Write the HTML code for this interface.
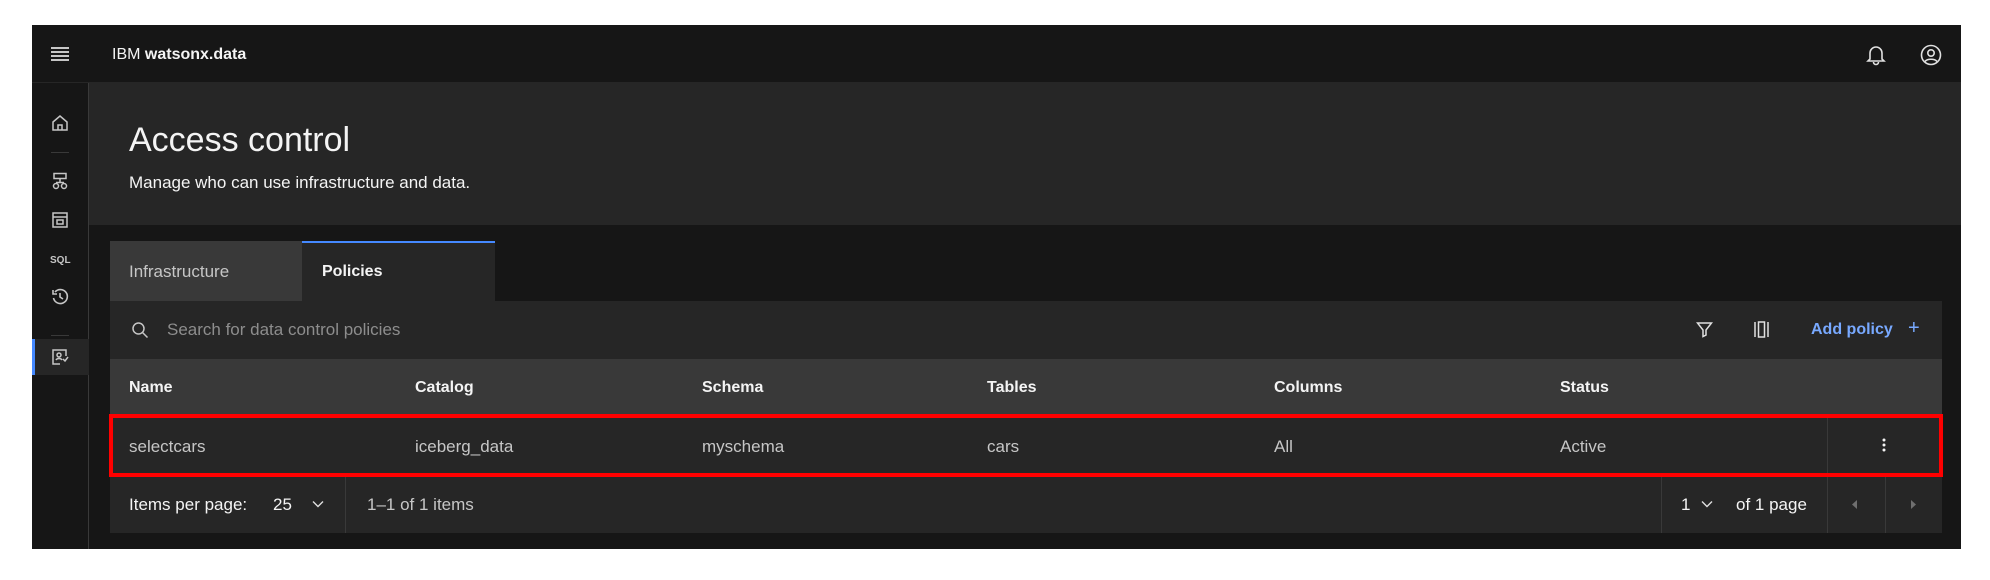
<!DOCTYPE html>
<html><head><meta charset="utf-8"><style>
*{box-sizing:border-box;margin:0;padding:0}
body{width:1990px;height:580px;background:#fff;font-family:"Liberation Sans",Arial,sans-serif;position:relative;overflow:hidden;color:#f4f4f4}
.a{position:absolute}
.t{position:absolute;white-space:nowrap;font-size:17px;line-height:20px}
b,.bb{font-size:16px}
svg{position:absolute}
</style></head><body>
<div class="a" style="left:32px;top:25px;width:1929px;height:524px;background:#161616"></div>
<div class="a" style="left:32px;top:25px;width:1929px;height:58px;background:#161616;border-bottom:1px solid #262626"></div>
<div class="a" style="left:51px;top:47px;width:18px;height:14px;background:repeating-linear-gradient(#c6c6c6 0 2px,transparent 2px 4px)"></div>
<div class="t" style="left:112px;top:45px;font-size:16px">IBM <b>watsonx.data</b></div>
<svg style="left:1866px;top:44px" width="20" height="22" viewBox="0 0 20 22" fill="none" stroke="#e0e0e0" stroke-width="1.6"><path d="M4 15V9a6 6 0 0 1 12 0v6l2 2H2z"/><path d="M7.5 18a2.5 2.5 0 0 0 5 0"/></svg>
<svg style="left:1920px;top:44px" width="22" height="22" viewBox="0 0 22 22" fill="none" stroke="#e0e0e0" stroke-width="1.6"><circle cx="11" cy="11" r="9.5"/><circle cx="11" cy="9" r="3.2"/><path d="M5 17.5c2-3 10-3 12 0"/></svg>
<div class="a" style="left:32px;top:83px;width:57px;height:466px;background:#161616;border-right:1px solid #393939"></div>
<svg style="left:51px;top:114px" width="18" height="18" viewBox="0 0 18 18" fill="none" stroke="#c6c6c6" stroke-width="1.5"><path d="M2 8L9 2l7 6v8H2z"/><path d="M7 16v-5h4v5"/></svg>
<div class="a" style="left:51px;top:152px;width:18px;height:1px;background:#393939"></div>
<svg style="left:51px;top:172px" width="18" height="18" viewBox="0 0 18 18" fill="none" stroke="#c6c6c6" stroke-width="1.5"><rect x="3" y="1.5" width="12" height="5"/><path d="M9 6.5v4M5 10.5h8"/><circle cx="5" cy="14" r="2.5"/><circle cx="13" cy="14" r="2.5"/></svg>
<svg style="left:51px;top:211px" width="18" height="18" viewBox="0 0 18 18" fill="none" stroke="#c6c6c6" stroke-width="1.5"><rect x="2" y="2" width="14" height="14"/><path d="M2 6h14"/><rect x="6" y="9" width="6" height="4"/></svg>
<div class="t" style="left:50px;top:251px;font-size:10px;font-weight:bold;color:#c6c6c6">SQL</div>
<svg style="left:51px;top:288px" width="18" height="18" viewBox="0 0 18 18" fill="none" stroke="#c6c6c6" stroke-width="1.6"><path d="M4 4a7 7 0 1 1-1.5 6"/><path d="M2 2v4h4"/><path d="M9 5v4l3 2"/></svg>
<div class="a" style="left:51px;top:335px;width:18px;height:1px;background:#393939"></div>
<div class="a" style="left:32px;top:339px;width:57px;height:36px;background:#262626;border-left:3px solid #4589ff"></div>
<svg style="left:51px;top:348px" width="18" height="18" viewBox="0 0 18 18" fill="none" stroke="#c6c6c6" stroke-width="1.5"><path d="M9 16H2V2h13v6"/><circle cx="8" cy="7" r="2"/><path d="M5 12c1-2 5-2 6 0"/><path d="M12 11l2 2 3-4"/></svg>
<div class="a" style="left:89px;top:83px;width:1872px;height:142px;background:#262626"></div>
<div class="t" style="left:129px;top:120px;font-size:34px;line-height:40px;font-weight:300">Access control</div>
<div class="t" style="left:129px;top:173px;font-size:17px">Manage who can use infrastructure and data.</div>
<div class="a" style="left:110px;top:241px;width:192px;height:60px;background:#393939"></div>
<div class="t" style="left:129px;top:262px;color:#c6c6c6">Infrastructure</div>
<div class="a" style="left:302px;top:241px;width:193px;height:60px;background:#262626;border-top:2px solid #4589ff"></div>
<div class="t bb" style="left:322px;top:262px;font-weight:bold">Policies</div>
<div class="a" style="left:110px;top:301px;width:1832px;height:58px;background:#262626"></div>
<svg style="left:131px;top:321px" width="18" height="18" viewBox="0 0 18 18" fill="none" stroke="#c6c6c6" stroke-width="1.5"><circle cx="7.5" cy="7.5" r="5.5"/><path d="M11.5 11.5l5 5"/></svg>
<div class="t" style="left:167px;top:320px;color:#8d8d8d">Search for data control policies</div>
<svg style="left:1696px;top:321px" width="17" height="17" viewBox="0 0 17 17" fill="none" stroke="#e0e0e0" stroke-width="1.5"><path d="M1.5 2h14l-5.5 7v5l-3 1.5V9z"/></svg>
<svg style="left:1754px;top:321px" width="15" height="17" viewBox="0 0 15 17" fill="none" stroke="#e0e0e0" stroke-width="1.5"><path d="M1 1v15M14 1v15"/><rect x="4.5" y="1" width="6" height="15"/></svg>
<div class="t" style="left:1811px;top:320px;color:#78a9ff;font-weight:bold;font-size:16px">Add policy</div>
<div class="t" style="left:1908px;top:318px;color:#78a9ff;font-size:20px">+</div>
<div class="a" style="left:110px;top:359px;width:1832px;height:57px;background:#393939"></div>
<div class="t bb" style="left:129px;top:378px;font-weight:bold">Name</div>
<div class="t bb" style="left:415px;top:378px;font-weight:bold">Catalog</div>
<div class="t bb" style="left:702px;top:378px;font-weight:bold">Schema</div>
<div class="t bb" style="left:987px;top:378px;font-weight:bold">Tables</div>
<div class="t bb" style="left:1274px;top:378px;font-weight:bold">Columns</div>
<div class="t bb" style="left:1560px;top:378px;font-weight:bold">Status</div>
<div class="a" style="left:110px;top:416px;width:1832px;height:59px;background:#262626"></div>
<div class="a" style="left:1827px;top:416px;width:1px;height:59px;background:#393939"></div>
<div class="t" style="left:129px;top:437px;color:#c6c6c6">selectcars</div>
<div class="t" style="left:415px;top:437px;color:#c6c6c6">iceberg_data</div>
<div class="t" style="left:702px;top:437px;color:#c6c6c6">myschema</div>
<div class="t" style="left:987px;top:437px;color:#c6c6c6">cars</div>
<div class="t" style="left:1274px;top:437px;color:#c6c6c6">All</div>
<div class="t" style="left:1560px;top:437px;color:#c6c6c6">Active</div>
<svg style="left:1882px;top:438px" width="4" height="14"><circle cx="2" cy="2" r="1.5" fill="#f4f4f4"/><circle cx="2" cy="7" r="1.5" fill="#f4f4f4"/><circle cx="2" cy="12" r="1.5" fill="#f4f4f4"/></svg>
<div class="a" style="left:109px;top:414px;width:1834px;height:63px;border:4px solid #f00"></div>
<div class="a" style="left:110px;top:477px;width:1832px;height:56px;background:#262626"></div>
<div class="t" style="left:129px;top:495px">Items per page:</div>
<div class="t" style="left:273px;top:495px">25</div>
<svg style="left:312px;top:500px" width="12" height="8" viewBox="0 0 12 8" fill="none" stroke="#e0e0e0" stroke-width="1.4"><path d="M1 1.5l5 5 5-5"/></svg>
<div class="a" style="left:345px;top:477px;width:1px;height:56px;background:#393939"></div>
<div class="t" style="left:367px;top:495px;color:#c6c6c6">1–1 of 1 items</div>
<div class="a" style="left:1661px;top:477px;width:1px;height:56px;background:#393939"></div>
<div class="t" style="left:1681px;top:495px">1</div>
<svg style="left:1701px;top:500px" width="12" height="8" viewBox="0 0 12 8" fill="none" stroke="#e0e0e0" stroke-width="1.4"><path d="M1 1.5l5 5 5-5"/></svg>
<div class="t" style="left:1736px;top:495px">of 1 page</div>
<div class="a" style="left:1827px;top:477px;width:1px;height:56px;background:#393939"></div>
<div class="a" style="left:1885px;top:477px;width:1px;height:56px;background:#393939"></div>
<svg style="left:1852px;top:500px" width="6" height="9"><path d="M5 0L0 4.5 5 9z" fill="#6f6f6f"/></svg>
<svg style="left:1910px;top:500px" width="6" height="9"><path d="M1 0l5 4.5L1 9z" fill="#6f6f6f"/></svg>
</body></html>
